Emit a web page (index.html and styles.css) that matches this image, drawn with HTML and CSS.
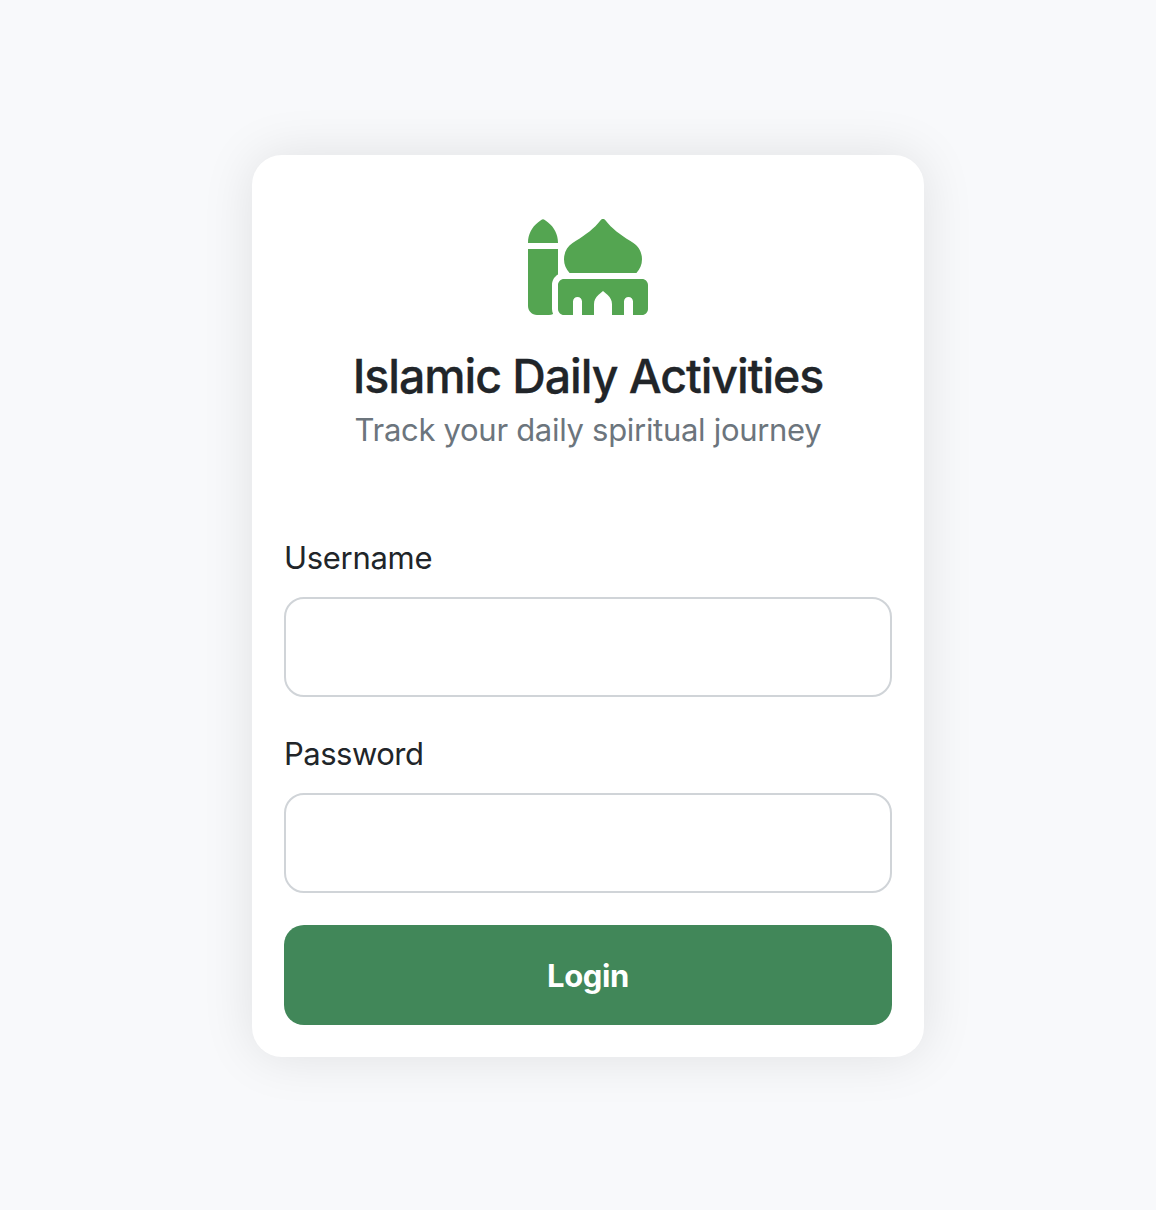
FILE: index.html
```html
<!DOCTYPE html>
<html lang="en">
<head>
<meta charset="utf-8">
<title>Islamic Daily Activities</title>
<link rel="stylesheet" href="styles.css">
</head>
<body>
<main class="card">
  <header class="brand">
    <svg class="logo" viewBox="0 0 640 512" aria-hidden="true">
      <path d="M400 0c5 0 9.800 2.400 12.800 6.400c34.700 46.300 78.100 74.900 133.500 111.500c5.200 3.400 10.500 7 16 10.600c28.900 19.200 45.700 51.700 45.700 86.100c0 28.600-11.300 54.500-29.800 73.400H221.800c-18.400-19-29.800-44.900-29.800-73.400c0-34.400 16.700-66.900 45.700-86.100c5.400-3.600 10.800-7.100 16-10.600C309.100 81.300 352.500 52.700 387.200 6.400c3-4 7.800-6.400 12.800-6.400z"/>
      <path d="M288 512V440c0-13.300-10.700-24-24-24s-24 10.700-24 24v72H192c-17.700 0-32-14.300-32-32V352c0-17.700 14.300-32 32-32H608c17.700 0 32 14.300 32 32V480c0 17.700-14.300 32-32 32H560V440c0-13.300-10.700-24-24-24s-24 10.700-24 24v72H448V454c0-19-8.400-37-23-49.200L400 384l-25 20.800C360.400 417 352 435 352 454v58H288z"/>
      <path d="M70.400 5.200c5.700-4.300 13.500-4.300 19.200 0l16 12C139.800 42.900 160 83.200 160 126v2H0v-2C0 83.200 20.200 42.900 54.400 17.200l16-12z"/>
      <path d="M0 160H160V296.600c-19.100 11.100-32 31.700-32 55.400V480c0 9.600 2.100 18.600 5.800 26.800c-6.600 3.400-14 5.200-21.800 5.200H48c-26.500 0-48-21.500-48-48V160z"/>
    </svg>
    <h1 class="title">Islamic Daily Activities</h1>
    <p class="subtitle">Track your daily spiritual journey</p>
  </header>
  <form class="form">
    <div class="field">
      <label class="label" for="username">Username</label>
      <input class="input" id="username" type="text">
    </div>
    <div class="field">
      <label class="label label-password" for="password">Password</label>
      <input class="input" id="password" type="password">
    </div>
    <button class="login" type="submit">Login</button>
  </form>
</main>
</body>
</html>
```
FILE: styles.css
```css
* { box-sizing: border-box; }

body {
  margin: 0;
  padding: 155px 0 0 252px;
  min-height: 1210px;
  background: #f8f9fb;
  color: #212529;
  font-family: Inter, "Liberation Sans", sans-serif;
  font-size: 31px;
  line-height: 50px;
  letter-spacing: -0.3px;
}

.card {
  width: 672px;
  height: 902px;
  padding: 64px 32px 32px;
  border-radius: 30px;
  background: #fff;
  box-shadow: 0 0 52px rgba(0, 0, 0, 0.1);
}

.brand {
  display: flex;
  flex-direction: column;
  align-items: center;
  height: 314px;
}

.logo {
  width: 120px;
  height: 96px;
  fill: #54a551;
}

.title {
  margin: 32px 0 0;
  font-size: 46.5px;
  font-weight: 500;
  line-height: 58px;
  letter-spacing: -1.07px;
  -webkit-text-stroke: 0.3px currentColor;
  white-space: nowrap;
}

.subtitle {
  margin: 0;
  color: #6c757d;
  white-space: nowrap;
}

.form {
  display: flex;
  flex-direction: column;
  gap: 32px;
}

.field {
  display: flex;
  flex-direction: column;
  gap: 16px;
}

.label { height: 48px; }

.label-password { letter-spacing: -0.5px; }

.input {
  width: 100%;
  height: 100px;
  padding: 24px;
  border: 2px solid #d0d4d8;
  border-radius: 20px;
  background: #fff;
  font: inherit;
}

.login {
  height: 100px;
  padding: 2px 0 0;
  border: 0;
  border-radius: 20px;
  background: #418759;
  color: #fff;
  font: inherit;
  font-weight: 700;
  letter-spacing: -0.4px;
}
```
